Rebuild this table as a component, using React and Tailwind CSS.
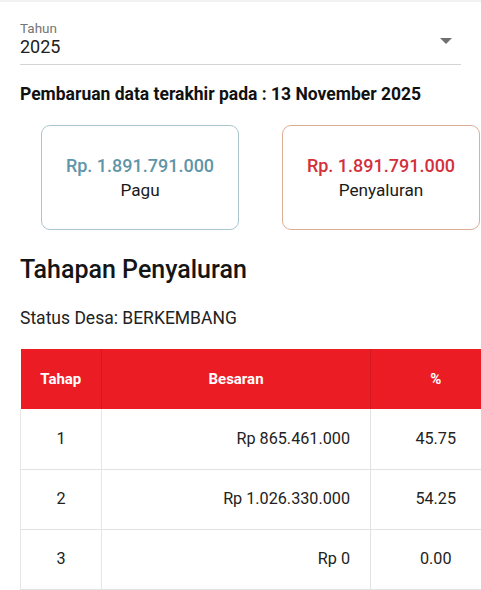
import React from "react";

const rows = [
  ["1", "Rp 865.461.000", "45.75"],
  ["2", "Rp 1.026.330.000", "54.25"],
  ["3", "Rp 0", "0.00"],
];

export default function App() {
  return (
    <div className="w-[481px] h-[590px] overflow-hidden bg-white text-[#212121]" style={{ fontFamily: "Roboto, 'Noto Sans', sans-serif" }}>
      <div className="h-[2px] bg-[#f1f1f1]" />
      <div className="pl-5 pr-5 pt-[18px]">
        <div className="w-[441px] border-b border-[#d4d4d4] flex items-end justify-between">
          <div className="flex flex-col">
            <span className="text-[13.5px] leading-[16px] text-[#757575]">Tahun</span>
            <span className="text-[18px] leading-[22px] text-[#212121] mb-[6px]">2025</span>
          </div>
          <svg width="12" height="6" viewBox="0 0 12 6" className="mb-[20px] mr-[9px]">
            <path d="M0 0 L12 0 L6 6 Z" fill="#6f6f6f" />
          </svg>
        </div>
        <div className="mt-[19px] text-[17.5px] leading-[20px] font-bold text-[#111]">
          Pembaruan data terakhir pada : 13 November 2025
        </div>
      </div>
      <div className="flex gap-[43px] pl-[41px] mt-[21px]">
        <div className="w-[198px] h-[105px] rounded-[9px] border border-[#a9c6cf] flex flex-col items-center justify-center">
          <span className="text-[18px] leading-[22px] font-medium text-[#5f95a8]">Rp. 1.891.791.000</span>
          <span className="text-[17.2px] leading-[22px] mt-[2px] text-[#1a1a1a]">Pagu</span>
        </div>
        <div className="w-[198px] h-[105px] rounded-[9px] border border-[#dcae98] flex flex-col items-center justify-center">
          <span className="text-[18px] leading-[22px] font-medium text-[#d3303c]">Rp. 1.891.791.000</span>
          <span className="text-[17.2px] leading-[22px] mt-[2px] text-[#1a1a1a]">Penyaluran</span>
        </div>
      </div>
      <div className="pl-5 mt-[25px] text-[25px] leading-[30px] font-medium text-[#151515]">Tahapan Penyaluran</div>
      <div className="pl-5 mt-[23px] text-[17.5px] leading-[20px] text-[#222]">Status Desa: BERKEMBANG</div>
      <div className="pl-5 mt-[21px]">
        <table className="w-[480px] border-collapse table-fixed">
          <colgroup>
            <col className="w-[81px]" />
            <col className="w-[269px]" />
            <col className="w-[130px]" />
          </colgroup>
          <thead>
            <tr className="bg-[#ec1c24] text-white h-[60px]">
              <th className="text-[15px] font-bold text-center border-r border-[#d61920]">Tahap</th>
              <th className="text-[15px] font-bold text-center border-r border-[#d61920]">Besaran</th>
              <th className="text-[15px] font-bold text-center">%</th>
            </tr>
          </thead>
          <tbody>
            {rows.map((r) => (
              <tr key={r[0]} className="h-[60px] border-b border-[#e2e2e2]">
                <td className="text-[16.2px] text-center border-l border-r border-[#e6e6e6] text-[#222]">{r[0]}</td>
                <td className="text-[16.2px] text-right pr-5 border-r border-[#e2e2e2] text-[#222]">{r[1]}</td>
                <td className="text-[16.2px] text-center text-[#222]">{r[2]}</td>
              </tr>
            ))}
          </tbody>
        </table>
      </div>
    </div>
  );
}
